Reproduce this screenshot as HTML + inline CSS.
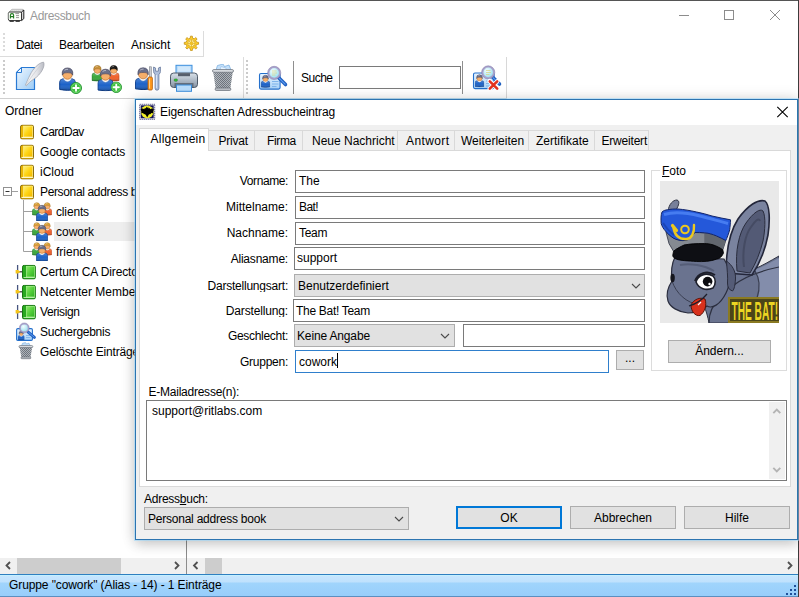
<!DOCTYPE html>
<html>
<head>
<meta charset="utf-8">
<title>Adressbuch</title>
<style>
html,body{margin:0;padding:0;}
body{width:799px;height:597px;overflow:hidden;background:#fff;font-family:"Liberation Sans",sans-serif;font-size:12px;color:#000;position:relative;}
.a{position:absolute;box-sizing:border-box;}
svg{position:absolute;overflow:visible;}
.t{position:absolute;white-space:nowrap;line-height:14px;height:14px;}
.inp{position:absolute;box-sizing:border-box;border:1px solid #7a7a7a;background:#fff;height:23px;}
.cmb{position:absolute;box-sizing:border-box;border:1px solid #adadad;background:#e1e1e1;height:23px;}
.btn{position:absolute;box-sizing:border-box;border:1px solid #adadad;background:#e1e1e1;text-align:center;}
.lbl{position:absolute;white-space:nowrap;text-align:right;width:150px;left:138px;line-height:14px;height:14px;}
.tab{position:absolute;box-sizing:border-box;top:131px;height:20px;border:1px solid #d9d9d9;border-bottom:none;background:#f0f0f0;text-align:left;line-height:21px;white-space:nowrap;}
.grip{position:absolute;width:2px;background:repeating-linear-gradient(to bottom,#cbcbcb 0,#cbcbcb 2px,transparent 2px,transparent 4px);}
</style>
</head>
<body>
<svg width="0" height="0" style="position:absolute">
<defs>
<linearGradient id="gpg" x1="0" y1="0" x2="1" y2="1"><stop offset="0" stop-color="#eef7ff"/><stop offset="1" stop-color="#9ccbf5"/></linearGradient>
<linearGradient id="gfe" x1="0" y1="0" x2="1" y2="0"><stop offset="0" stop-color="#ffffff"/><stop offset=".6" stop-color="#e4e5e9"/><stop offset="1" stop-color="#b9bbc3"/></linearGradient>
<linearGradient id="gpr" x1="0" y1="0" x2="0" y2="1"><stop offset="0" stop-color="#d9e2ea"/><stop offset="1" stop-color="#8592a2"/></linearGradient>
<linearGradient id="gtr" x1="0" y1="0" x2="1" y2="0"><stop offset="0" stop-color="#c9cdd2"/><stop offset=".5" stop-color="#8d939b"/><stop offset="1" stop-color="#b4b9bf"/></linearGradient>
<linearGradient id="gcard" x1="0" y1="0" x2="0" y2="1"><stop offset="0" stop-color="#e6f3ff"/><stop offset="1" stop-color="#a8d2f8"/></linearGradient>
<linearGradient id="gyb" x1="0" y1="0" x2="1" y2="1"><stop offset="0" stop-color="#fff27a"/><stop offset=".5" stop-color="#ffd414"/><stop offset="1" stop-color="#f0b400"/></linearGradient>
<linearGradient id="ggb" x1="0" y1="0" x2="1" y2="1"><stop offset="0" stop-color="#8fe86a"/><stop offset=".5" stop-color="#55d03c"/><stop offset="1" stop-color="#2fb022"/></linearGradient>
<radialGradient id="glens" cx=".4" cy=".35" r=".7"><stop offset="0" stop-color="#f4fdff"/><stop offset="1" stop-color="#8fdcec"/></radialGradient>
<pattern id="mesh" width="2" height="2" patternUnits="userSpaceOnUse"><rect width="2" height="2" fill="#b4bac1"/><rect width="1" height="1" fill="#5d636b"/><rect x="1" y="1" width="1" height="1" fill="#5d636b"/></pattern>
<linearGradient id="gshade" x1="0" y1="0" x2="0" y2="1"><stop offset="0" stop-color="#fff" stop-opacity=".22"/><stop offset=".5" stop-color="#fff" stop-opacity="0"/><stop offset="1" stop-color="#000" stop-opacity=".25"/></linearGradient>
<symbol id="person" viewBox="0 0 17 24">
<path d="M.7,22.8V15.5Q.7,12.4 4.2,12.1L8.5,14.6L12.8,12.1Q16.3,12.4 16.3,15.5V22.8Q8.5,24.5 .7,22.8Z" fill="var(--b)" stroke="var(--bs)" stroke-width="1"/>
<path d="M.7,22.8V15.5Q.7,12.4 4.2,12.1L8.5,14.6L12.8,12.1Q16.3,12.4 16.3,15.5V22.8Q8.5,24.5 .7,22.8Z" fill="url(#gshade)"/>
<path d="M4.6,12.2Q8.5,17.2 12.4,12.2L11,10.8H6Z" fill="#fff" stroke="#cfd9e6" stroke-width=".4"/>
<ellipse cx="8.5" cy="7.2" rx="4.9" ry="5.4" fill="#f5ae6a" stroke="#b8702f" stroke-width=".7"/>
<path d="M3.3,8.4Q2.3,1.4 8.5,1.2Q14.7,1.4 13.7,8.4Q12.8,5.4 8.5,6Q4.2,5.4 3.3,8.4Z" fill="var(--h)" stroke="var(--hs)" stroke-width=".6"/>
<path d="M5.5,3.6Q7,2.4 9,2.6" stroke="#fff" stroke-width=".9" fill="none" opacity=".6"/>
</symbol>
<symbol id="plus" viewBox="0 0 12 12">
<circle cx="6" cy="6" r="5.5" fill="#3fbf3f" stroke="#1c8c2a" stroke-width=".9"/>
<circle cx="6" cy="6" r="4.6" fill="none" stroke="#8fe88a" stroke-width=".6"/>
<path d="M6,3.2V8.8M3.2,6H8.8" stroke="#fff" stroke-width="1.9" stroke-linecap="round"/>
</symbol>
<symbol id="ybook" viewBox="0 0 14 15">
<path d="M2.4,.5H11.8Q13.5,.5 13.5,2.2V12.8Q13.5,14.5 11.8,14.5H2.4Q.5,14.5 .5,12.6V2.4Q.5,.5 2.4,.5Z" fill="#e8b400" stroke="#8a6d10" stroke-width="1"/>
<rect x="3.6" y="1.5" width="9" height="10.8" fill="url(#gyb)" stroke="#fff4a0" stroke-width=".6"/>
<path d="M1.6,12.9H12.9" stroke="#fffbe0" stroke-width=".9"/>
</symbol>
<symbol id="gbook" viewBox="0 0 14 15">
<path d="M2.4,.5H11.8Q13.5,.5 13.5,2.2V12.8Q13.5,14.5 11.8,14.5H2.4Q.5,14.5 .5,12.6V2.4Q.5,.5 2.4,.5Z" fill="#27a81e" stroke="#14730f" stroke-width="1"/>
<rect x="4.4" y="1.5" width="8.2" height="10.8" fill="url(#ggb)" stroke="#b4f59a" stroke-width=".6"/>
<path d="M1.6,12.9H12.9" stroke="#d8ffc8" stroke-width=".8"/>
</symbol>
<symbol id="group" viewBox="0 0 20 19">
<use href="#person" x="0" y="0" width="9.6" height="13.6" style="--b:#3aa63a;--bs:#1e7a22;--h:#d8a23a;--hs:#a87420"/>
<use href="#person" x="10.4" y="0" width="9.6" height="13.6" style="--b:#f0602a;--bs:#b8401a;--h:#d8a23a;--hs:#a87420"/>
<use href="#person" x="3.9" y="2.4" width="12.2" height="17.2" style="--b:#1c62c8;--bs:#0e3f8e;--h:#6a6f8a;--hs:#3e4260"/>
</symbol>
<symbol id="trash" viewBox="0 0 22 27">
<path d="M4,6L5.5,1.5L11,0L12.5,2.5L17,1L19,6Z" fill="#c4e0fa" stroke="#74aade" stroke-width=".7"/>
<path d="M8,6L9,2.5L14,4L14.5,6Z" fill="#e8f4ff" stroke="#8fbbe6" stroke-width=".6"/>
<path d="M1.2,7.5H20.8L18.2,25H3.8Z" fill="url(#mesh)"/>
<path d="M1.2,7.5H20.8L18.2,25H3.8Z" fill="url(#gtr)" opacity=".3"/>
<rect x=".5" y="5.6" width="21" height="2.6" rx="1.3" fill="#dfe3e7" stroke="#6a7078" stroke-width=".8"/>
<rect x="3.2" y="24" width="15.6" height="2.4" rx="1" fill="#c2c7cc" stroke="#6a7078" stroke-width=".8"/>
</symbol>
<symbol id="scard" viewBox="0 0 30 30">
<rect x="2" y="13" width="20.6" height="15.6" rx="1.5" fill="url(#gcard)" stroke="#2470cc" stroke-width="1.1"/>
<use href="#person" x="3.3" y="14" width="9.4" height="13.3" style="--b:#1c62c8;--bs:#0e3f8e;--h:#6a6f8a;--hs:#3e4260"/>
<path d="M14.5,21H21M14.5,23.5H21M14.5,26H19" stroke="#7fb4ea" stroke-width="1"/>
<path d="M21.5,17.5L28,24" stroke="#1f5fc0" stroke-width="3.6" stroke-linecap="round"/>
<path d="M21.8,17.8L27.6,23.6" stroke="#5a9af0" stroke-width="1.2" stroke-linecap="round"/>
<circle cx="16.7" cy="12.4" r="5.7" fill="url(#glens)" stroke="#a9a2cc" stroke-width="1.8"/>
<circle cx="16.7" cy="12.4" r="6.6" fill="none" stroke="#7a74a4" stroke-width=".5"/>
<path d="M14.5,10.5H19M14.5,12.5H19.5M14.5,14.5H18" stroke="#d8d070" stroke-width=".8" opacity=".8"/>
</symbol>

</defs>
</svg>
<!-- main window frame -->
<div class="a" id="topline" style="left:0;top:0;width:799px;height:1px;background:#555;"></div>
<div class="a" id="rightline" style="left:798px;top:0;width:1px;height:597px;background:#3c3c3c;"></div>
<div class="t" id="title" style="left:30px;top:9px;color:#999;letter-spacing:-0.34px;">Adressbuch</div>
<!--TITLEICONS-->

<!-- menu -->
<div class="a" id="menuband" style="left:0;top:31px;width:204px;height:26px;border-right:1px solid #dcdcdc;border-bottom:1px solid #dcdcdc;"></div>
<div class="grip" style="left:3px;top:33px;height:20px;opacity:.7;"></div>
<div class="t" style="left:16px;top:38px;letter-spacing:-0.4px;">Datei</div>
<div class="t" style="left:59px;top:38px;letter-spacing:-0.3px;">Bearbeiten</div>
<div class="t" style="left:131px;top:38px;">Ansicht</div>

<!-- toolbar -->
<div class="a" id="tbband" style="left:0;top:57px;width:507px;height:42px;border-right:1px solid #d8d8d8;border-bottom:1px solid #d0d0d0;"></div>
<div class="grip" style="left:3px;top:60px;height:34px;"></div>
<div class="a" style="left:243px;top:57px;width:1px;height:41px;background:#dcdcdc;"></div>
<div class="grip" style="left:246px;top:60px;height:34px;"></div>
<div class="a" style="left:293px;top:61px;width:1px;height:33px;background:#8f8f8f;"></div>
<div class="a" style="left:462px;top:61px;width:1px;height:33px;background:#8f8f8f;"></div>
<div class="t" style="left:301px;top:71px;letter-spacing:-0.5px;">Suche</div>
<div class="inp" style="left:339px;top:66px;width:122px;height:23px;"></div>
<svg id="ov1" width="799" height="597" viewBox="0 0 799 597" style="left:0;top:0;">
<!-- title icon -->
<g id="ticon">
<path d="M9,12L12,9.3H22.7L21.5,12Z" fill="#fafafa" stroke="#777" stroke-width=".5"/>
<path d="M11.6,10.6H21.8" stroke="#b0b0b0" stroke-width=".8" stroke-dasharray="1 1"/>
<path d="M21.6,12L23.8,10V18.6L21.6,20.6Z" fill="#fff" stroke="#000" stroke-width=".9"/>

<rect x="8.4" y="12" width="13.2" height="8.6" rx="1.4" fill="#fbfdf8" stroke="#1a1a1a" stroke-width=".9"/>
<path d="M8.4,19V13.4Q8.4,12 9.8,12H20" fill="none" stroke="#9aa09a" stroke-width=".9"/>
<path d="M9.6,20.8h4.2v1h-4.2zM15.6,20.8h4.2v1h-4.2z" fill="#111"/>
<path d="M10.4,18.6V15.2Q10.4,13.6 12,13.6Q13.6,13.6 13.6,15.2V18.6M10.4,16.6H13.6" stroke="#1f7a1f" stroke-width="1.1" fill="none"/>
<path d="M15.3,13.6H19M16,15.6H19M16,17.6H19" stroke="#8a8a8a" stroke-width=".9"/>
</g>
<!-- window controls -->
<path d="M679,15.5H689" stroke="#8c8c8c" stroke-width="1"/>
<rect x="724.5" y="10.5" width="9" height="9" fill="none" stroke="#8c8c8c" stroke-width="1"/>
<path d="M770,10L780,20M780,10L770,20" stroke="#8c8c8c" stroke-width="1"/>
<!-- gear -->
<path d="M196.58,42.17L198.54,42.35L198.54,44.25L196.58,44.43L195.86,46.16L197.12,47.68L195.78,49.02L194.26,47.76L192.53,48.48L192.35,50.44L190.45,50.44L190.27,48.48L188.54,47.76L187.02,49.02L185.68,47.68L186.94,46.16L186.22,44.43L184.26,44.25L184.26,42.35L186.22,42.17L186.94,40.44L185.68,38.92L187.02,37.58L188.54,38.84L190.27,38.12L190.45,36.16L192.35,36.16L192.53,38.12L194.26,38.84L195.78,37.58L197.12,38.92L195.86,40.44Z" fill="#ffcf2a" stroke="#c4921a" stroke-width=".8"/>
<circle cx="191.4" cy="43.3" r="3.7" fill="#fff3b0" stroke="#d6a51c" stroke-width=".7"/>
<path d="M191.4,39.6V47M187.7,43.3H195.1M188.8,40.7L194,45.9M194,40.7L188.8,45.9" stroke="#e0ae1e" stroke-width=".9"/>
<circle cx="191.4" cy="43.3" r="1.2" fill="#f2c226"/>
<!-- tb1 page+feather -->
<path d="M21.5,67.5H34.5V89.5H16.5V72.5Z" fill="url(#gpg)" stroke="#2a7ad4" stroke-width="1.2"/>
<path d="M21.5,67.5V72.5H16.5Z" fill="#f4faff" stroke="#2a7ad4" stroke-width="1"/>
<path d="M43.6,62.2C45.5,66 41,74.5 34,79C31,81 28.6,82.5 26.4,85.8L25.4,85.2C27,81.5 28,79 30,75C33,68.5 39,62.5 43.6,62.2Z" fill="url(#gfe)" stroke="#9a9ca6" stroke-width=".7"/>
<path d="M42.5,63.5C38,68 31,77 26,85" fill="none" stroke="#c8cad0" stroke-width=".7"/>
<!-- tb2 person add -->
<use href="#person" x="59" y="66.4" width="17" height="24.6" style="--b:#1c62c8;--bs:#0e3f8e;--h:#6a6f8a;--hs:#3e4260"/>
<use href="#plus" x="70" y="82" width="12" height="12"/>
<!-- tb3 group add -->
<use href="#person" x="91.5" y="64.2" width="11.8" height="17.6" style="--b:#3aa63a;--bs:#1e7a22;--h:#c8923a;--hs:#8a6420"/>
<use href="#person" x="107.8" y="64.2" width="11.8" height="17.6" style="--b:#f0602a;--bs:#b8401a;--h:#1a1a1a;--hs:#000"/>
<use href="#person" x="97.3" y="68" width="16.4" height="23.2" style="--b:#1c62c8;--bs:#0e3f8e;--h:#6a6f8a;--hs:#3e4260"/>
<use href="#plus" x="110.5" y="81.5" width="11.5" height="11.5"/>
<!-- tb4 person tools -->
<use href="#person" x="134.8" y="66.5" width="16.6" height="23.6" style="--b:#1c62c8;--bs:#0e3f8e;--h:#6a6f8a;--hs:#3e4260"/>
<rect x="149.3" y="66.8" width="2" height="11" fill="#c9ccd2" stroke="#7e828a" stroke-width=".6"/>
<rect x="148" y="77" width="4.4" height="13" rx="1.2" fill="#ff9a1e" stroke="#b85e0a" stroke-width=".8"/>
<path d="M149.5,78.5V88.5" stroke="#ffd08a" stroke-width="1"/>
<path d="M153.6,67V71.5Q153.6,73.6 155.1,74.2V88.2Q155.1,90.2 157,90.2Q158.9,90.2 158.9,88.2V74.2Q160.4,73.6 160.4,71.5V67L158.4,68V71.2H155.6V68Z" fill="#aebfdc" stroke="#64769a" stroke-width=".8"/><path d="M156.4,75V88" stroke="#dfe8f6" stroke-width="1"/>
<!-- tb5 printer -->
<rect x="176" y="65.3" width="16" height="9" fill="#b9dcfb" stroke="#3d8fdd" stroke-width="1"/>
<rect x="178" y="66.5" width="12" height="5" fill="#dcecfb" opacity=".7"/>
<rect x="170.5" y="73" width="27" height="14.5" rx="3.2" fill="url(#gpr)" stroke="#4e5a68" stroke-width="1"/>
<rect x="178" y="73.2" width="12" height="3" fill="#565f6c"/>
<rect x="174.3" y="79" width="3" height="2.2" rx=".6" fill="#38c838" stroke="#1a7a1a" stroke-width=".5"/>
<rect x="174.5" y="83" width="19" height="4.3" fill="#646e7c"/>
<rect x="176.5" y="85" width="15" height="6.3" fill="#b9dcfb" stroke="#3d8fdd" stroke-width="1"/>
<!-- tb6 trash -->
<use href="#trash" x="212" y="64" width="22" height="27"/>
<!-- tb7 search card -->
<use href="#scard" x="257.5" y="60.5" width="30" height="30"/>
<!-- tb8 search card cancel -->
<use href="#scard" x="471.5" y="60" width="30" height="30"/>
<path d="M489.5,81L497.5,89M497.5,81L489.5,89" stroke="#fff" stroke-width="4.2" stroke-linecap="round"/>
<path d="M489.8,81.3L497.2,88.7M497.2,81.3L489.8,88.7" stroke="#e2321e" stroke-width="2.6" stroke-linecap="round"/>
<!-- tree -->
<use href="#ybook" x="20" y="124.6" width="14" height="15"/>
<use href="#ybook" x="20" y="144.6" width="14" height="15"/>
<use href="#ybook" x="20" y="164.6" width="14" height="15"/>
<use href="#ybook" x="20" y="184.6" width="14" height="15"/>
<rect x="3.5" y="187.5" width="8" height="8" fill="#fff" stroke="#919191" stroke-width="1"/>
<path d="M5.5,191.5H9.5" stroke="#333" stroke-width="1"/>
<path d="M12,191.5H18" stroke="#a0a0a0" stroke-width="1"/>
<path d="M23.5,200V251.5M23.5,211.5H33M23.5,231.5H33M23.5,251.5H33" stroke="#a0a0a0" stroke-width="1" fill="none"/>
<use href="#group" x="32" y="202" width="20" height="19"/>
<use href="#group" x="32" y="222" width="20" height="19"/>
<use href="#group" x="32" y="242" width="20" height="19"/>
<g id="gb1">
<path d="M17.6,265V279" stroke="#46547e" stroke-width="1.3"/><path d="M18,271.8H22" stroke="#333" stroke-width="1.2"/>
<path d="M15.6,270H18L20.4,271.8L18,273.6H15.6Z" fill="#f4c41a"/>
<use href="#gbook" x="21.8" y="264.8" width="14.2" height="14.8"/>
</g>
<use href="#gb1" y="20"/><use href="#gb1" y="40"/>
<g id="ssearch">
<rect x="16.6" y="328.6" width="15.8" height="11.8" rx="1.2" fill="url(#gcard)" stroke="#2470cc" stroke-width="1.1"/>
<use href="#person" x="17.8" y="330.6" width="6.8" height="9.6" style="--b:#1c62c8;--bs:#0e3f8e;--h:#6a6f8a;--hs:#3e4260"/>
<path d="M26,335.5H30.5M26,337.5H30.5" stroke="#7fb4ea" stroke-width=".9"/>
<path d="M28.2,332.2L34.4,337.4" stroke="#1f5fc0" stroke-width="3" stroke-linecap="round"/>
<path d="M28.6,332.4L34,337" stroke="#5a9af0" stroke-width="1" stroke-linecap="round"/>
<circle cx="24.3" cy="327.9" r="4.2" fill="url(#glens)" stroke="#a9a2cc" stroke-width="1.5"/>
<circle cx="24.3" cy="327.9" r="5" fill="none" stroke="#7a74a4" stroke-width=".4"/>
</g>
<g id="strash">
<path d="M21.5,346L22.5,343.3L25.5,342.6L26.5,344L29,343.2L30.3,346Z" fill="#c4e0fa" stroke="#74aade" stroke-width=".6"/>
<path d="M19.6,347H32.2L30.4,357.6H21.4Z" fill="url(#mesh)"/>
<path d="M19.6,347H32.2L30.4,357.6H21.4Z" fill="url(#gtr)" opacity=".3"/>
<rect x="19" y="345.6" width="13.8" height="2" rx="1" fill="#dfe3e7" stroke="#6a7078" stroke-width=".7"/>
<rect x="21" y="357" width="9.8" height="1.7" rx=".8" fill="#c2c7cc" stroke="#6a7078" stroke-width=".7"/>
</g>
</svg>


<!-- left panel -->
<div class="t" style="left:5px;top:104px;">Ordner</div>
<div class="a" id="sel" style="left:54px;top:222px;width:90px;height:19px;background:#eeeeee;"></div>
<!--TREEICONS-->
<div class="t" style="left:40px;top:125px;letter-spacing:-0.5px;">CardDav</div>
<div class="t" style="left:40px;top:145px;letter-spacing:-0.1px;">Google contacts</div>
<div class="t" style="left:40px;top:165px;">iCloud</div>
<div class="t" style="left:40px;top:185px;letter-spacing:-0.35px;">Personal address b</div>
<div class="t" style="left:56px;top:205px;letter-spacing:-0.15px;">clients</div>
<div class="t" style="left:56px;top:225px;">cowork</div>
<div class="t" style="left:56px;top:245px;">friends</div>
<div class="t" style="left:40px;top:265px;letter-spacing:-0.13px;">Certum CA Directc</div>
<div class="t" style="left:40px;top:285px;">Netcenter Membe</div>
<div class="t" style="left:40px;top:305px;letter-spacing:-0.4px;">Verisign</div>
<div class="t" style="left:40px;top:325px;letter-spacing:-0.27px;">Suchergebnis</div>
<div class="t" style="left:40px;top:345px;letter-spacing:-0.17px;">Gelöschte Einträge</div>

<!-- splitter, scrollbars -->
<div class="a" id="split" style="left:186px;top:99px;width:1px;height:475px;background:#8c8c8c;"></div>
<div class="a" id="hs1" style="left:0;top:558px;width:186px;height:16px;background:#f0f0f0;"></div>
<div class="a" id="hs1t" style="left:17px;top:558px;width:104px;height:16px;background:#cdcdcd;"></div>
<div class="a" id="hs2" style="left:187px;top:558px;width:611px;height:16px;background:#f0f0f0;"></div>
<div class="a" id="hs2t" style="left:205px;top:558px;width:17px;height:16px;background:#cdcdcd;"></div>
<!--SCROLLARROWS-->

<!-- status bar -->
<div class="a" id="status" style="left:0;top:574px;width:798px;height:23px;border-top:1px solid #2f7fc0;border-bottom:1px solid #5c8fc0;background:linear-gradient(#c4f0ff 0,#c4f0ff 1px,#c6e5fe 1px,#bfe1fd 7px,#a0d4fc 8px,#98cefb 100%);"></div>
<div class="t" style="left:9px;top:578px;letter-spacing:-0.1px;">Gruppe "cowork" (Alias - 14) - 1 Einträge</div>

<!-- dialog -->
<div class="a" id="dlg" style="left:135px;top:99px;width:663px;height:441px;border:1px solid #2c74b0;background:#f0f0f0;box-shadow:0 0 0 1px rgba(150,215,255,0.5),0 0 14px rgba(0,0,0,0.15),0 5px 12px rgba(0,0,0,0.15);"></div>
<div class="a" id="dlgtitle" style="left:136px;top:100px;width:661px;height:25px;background:#fff;"></div>
<div class="t" style="left:160px;top:105px;letter-spacing:-0.12px;">Eigenschaften Adressbucheintrag</div>
<!--DLGICONS-->
<!-- tab page -->
<div class="a" id="page" style="left:139px;top:150px;width:652px;height:337px;background:#fff;border:1px solid #d9d9d9;"></div>
<div class="tab" style="left:208px;top:130px;width:47px;padding-left:9.5px;letter-spacing:-.2px;">Privat</div>
<div class="tab" style="left:254px;top:130px;width:49px;padding-left:12px;letter-spacing:-.35px;">Firma</div>
<div class="tab" style="left:302px;top:130px;width:96px;padding-left:9px;">Neue Nachricht</div>
<div class="tab" style="left:397px;top:130px;width:58px;padding-left:8px;letter-spacing:.4px;">Antwort</div>
<div class="tab" style="left:454px;top:130px;width:75px;padding-left:6px;">Weiterleiten</div>
<div class="tab" style="left:528px;top:130px;width:67px;padding-left:7px;">Zertifikate</div>
<div class="tab" style="left:594px;top:130px;width:55px;padding-left:6.5px;letter-spacing:-.2px;border-right:1px solid #d9d9d9;">Erweitert</div>
<div class="tab" style="left:139px;top:128px;width:70px;height:23px;background:#fff;line-height:21px;padding-left:10.5px;letter-spacing:.25px;">Allgemein</div>

<!-- form -->
<div class="lbl" style="top:174px;letter-spacing:-0.4px;">Vorname:</div>
<div class="lbl" style="top:200px;">Mittelname:</div>
<div class="lbl" style="top:226px;">Nachname:</div>
<div class="lbl" style="top:252px;letter-spacing:-0.2px;">Aliasname:</div>
<div class="lbl" style="top:279px;height:13px;overflow:hidden;letter-spacing:-0.22px;">Darstellungsart:</div>
<div class="lbl" style="top:303.5px;height:13px;overflow:hidden;letter-spacing:-0.15px;">Darstellung:</div>
<div class="lbl" style="top:329px;letter-spacing:-0.3px;">Geschlecht:</div>
<div class="lbl" style="top:355px;letter-spacing:-0.25px;">Gruppen:</div>

<div class="inp" style="left:295px;top:170px;width:350px;"></div>
<div class="inp" style="left:295px;top:196px;width:350px;"></div>
<div class="inp" style="left:295px;top:222px;width:350px;"></div>
<div class="inp" style="left:294px;top:247px;width:351px;"></div>
<div class="cmb" style="left:294px;top:274px;width:351px;"></div>
<div class="inp" style="left:293px;top:299px;width:352px;"></div>
<div class="cmb" style="left:294px;top:324px;width:161px;"></div>
<div class="inp" style="left:463px;top:324px;width:182px;"></div>
<div class="inp" style="left:295px;top:350px;width:314px;border-color:#2f7fcc;"></div>
<div class="btn" style="left:616px;top:350px;width:28px;height:20px;line-height:14px;">...</div>
<div class="a" id="caret" style="left:337px;top:353px;width:1px;height:15px;background:#000;"></div>

<div class="t" style="left:299px;top:174px;">The</div>
<div class="t" style="left:299px;top:200px;letter-spacing:-0.6px;">Bat!</div>
<div class="t" style="left:299px;top:226px;letter-spacing:-0.3px;">Team</div>
<div class="t" style="left:297px;top:251px;">support</div>
<div class="t" style="left:298px;top:279px;">Benutzerdefiniert</div>
<div class="t" style="left:296px;top:303.5px;letter-spacing:-0.3px;">The Bat! Team</div>
<div class="t" style="left:297px;top:329px;letter-spacing:-0.15px;">Keine Angabe</div>
<div class="t" style="left:299px;top:355px;">cowork</div>
<!--COMBOARROWS-->

<!-- photo group -->
<div class="a" id="grp" style="left:651px;top:170px;width:136px;height:201px;border:1px solid #dcdcdc;"></div>
<div class="t" style="left:660px;top:164px;background:#fff;padding:0 13px 0 2px;"><u>F</u>oto</div>
<svg id="photo" width="119" height="142" viewBox="0 0 119 142" style="left:660px;top:181px;overflow:hidden;">
<rect width="119" height="142" fill="#e9e9e9"/>
<!-- body / wing background right -->
<path d="M60,84L94,88C102,85 110,80 119,75V142H49C48,136 46,130 44,124L62,100Z" fill="#6a738f" stroke="#2e3242" stroke-width="1"/>
<path d="M95,89C102,86 110,82 119,77V117H98C100,106 99,96 95,89Z" fill="#838dab"/>
<path d="M74,104C84,96 100,90 119,86" fill="none" stroke="#2e3242" stroke-width="1.2"/>
<path d="M95,90C100,98 100,108 97,117" fill="none" stroke="#3a3f52" stroke-width="1.2"/>
<path d="M49,142C49,132 52,124 60,118" fill="none" stroke="#2e3242" stroke-width="1.2"/>
<!-- left small ear -->
<path d="M8,30C9,23 13,19 17,19C20,20 19,24 16,29Z" fill="#78809a" stroke="#2e3242" stroke-width="1"/>
<!-- big right ear -->
<path d="M66,92C66,70 69,52 78,38C88,24 98,18 105,20C110,24 110,40 108,54C105,70 100,82 92,94Z" fill="#7a839f" stroke="#23263a" stroke-width="1.6"/>
<path d="M77,90C75,70 79,52 86,42C93,32 100,27 103,30C106,36 105,50 103,60C100,72 96,82 90,92Z" fill="#535a75" stroke="#2a2d3e" stroke-width="1"/>
<path d="M84,86C82,70 85,54 91,46C95,40 99,36 100,40" fill="none" stroke="#454b63" stroke-width="2"/>
<!-- head -->
<path d="M15,76C11,84 11,92 12,100C8,106 6,114 8,120C10,126 18,131 28,132C36,132 42,129 47,125C52,128 60,124 66,112C72,100 70,88 64,78Z" fill="#6a738f" stroke="#2a2d3e" stroke-width="1.2"/>
<path d="M12,100C16,112 26,122 40,124" fill="none" stroke="#3a3f52" stroke-width="1"/>
<path d="M66.5,80C72,84 76,90 75.5,98C75,104 74.5,108 72.5,110C69,109 67.5,106 67.5,102C68,96 67,88 66.5,80Z" fill="#555c77" stroke="#2a2d3e" stroke-width="1"/>
<path d="M20,84C30,82 44,84 54,90" fill="none" stroke="#565e78" stroke-width="2"/>
<ellipse cx="12.6" cy="97" rx="2.2" ry="4.2" fill="#15161e"/>
<!-- eye -->
<path d="M36,101C38,94 46,91 53,95C56,98 56,103 53,107C46,110 39,108 36,101Z" fill="#fff" stroke="#1d1f2b" stroke-width="1.6"/>
<circle cx="47.6" cy="100.6" r="4.8" fill="#0c0c10"/>
<circle cx="49.5" cy="103" r="1.2" fill="#fff"/>
<path d="M35,100C38,92 47,89 55,94" fill="none" stroke="#1d1f2b" stroke-width="2"/>
<!-- mouth -->
<path d="M31,124C34,118 40,116 45,118C47,124 45,131 40,134.5C35,135.5 31,130 31,124Z" fill="#d8311c" stroke="#5a1208" stroke-width="1"/>
<path d="M38,124L41,121" stroke="#fff" stroke-width="1.2"/>
<path d="M29,125C36,123 42,119 47,113" fill="none" stroke="#1d1f2b" stroke-width="1.2"/>
<!-- cap: grey band -->
<path d="M5.8,50.3L13.5,57.2L21.2,59.5L27.4,58.8L35,51.5L44.3,51.8L56.6,55L65.8,59.5L62.8,68.8C56,64 50,62.6 44.3,62.6C36,62.6 30,63 24.3,64C20,66 16,68 13.5,70.3L9,62.6Z" fill="#858a92" stroke="#2a2d3e" stroke-width=".8"/>
<path d="M44.3,51.8L56.6,55L65.8,59.5L62.8,68.8C56,64 50,62.6 44.3,62.6Z" fill="#62676f"/>
<!-- visor -->
<path d="M13.5,70.3C16,68 20,66 24.3,64C30,63 36,62.6 44.3,62.6C50,62.6 56,64 62.8,68.8L63.5,72C62,76 59,78 56.6,78.2C50,80.5 43,80.8 36.6,80.5C28,80 20,79.5 16.6,78.2C14,77 12.5,76 12.8,74Z" fill="#0e0f14" stroke="#000" stroke-width=".8"/>
<!-- crown -->
<path d="M2,31C3.5,29.5 5.5,29 7.4,28.8C11,28 14,28 18,28C24,28.5 30,29.5 36.6,31C42,32 47,33.5 52,35C58,36.5 64,37.5 70.5,38.8C70.5,42 70,46 69.7,48.8C68.5,53 67,57 65.8,59.5C63,58 60,56.5 56.6,55C52,53 48,52 44.3,51.8C41,51.4 38,51.3 35,51.5C32,53.5 30,56 27.4,58.8C25,59.5 23,59.8 21.2,59.5C18,59 16,58.5 13.5,57.2C10,55 8,53 5.8,50.3C3.5,48 2,45.5 1.2,42.6C.8,38 1,34 2,31Z" fill="#2458da" stroke="#12256a" stroke-width="1"/>
<path d="M4,33.5C12,31 26,31.5 40,35C50,37.5 60,40.5 68,42.5" fill="none" stroke="#4f86f6" stroke-width="3" opacity=".8"/>
<path d="M3,42C6,47 10,51 14,54" fill="none" stroke="#1a3fa8" stroke-width="2" opacity=".7"/>
<!-- horn emblem -->
<circle cx="25" cy="48.5" r="3.8" fill="none" stroke="#ecc81e" stroke-width="2"/>
<path d="M13.5,47C15,55 20,58.5 26.5,58C31.5,57.5 34.5,52 34,44" fill="none" stroke="#ecc81e" stroke-width="2.4" stroke-linecap="round"/>
<path d="M12.5,44.5L16.5,49.5" stroke="#ecc81e" stroke-width="3.2" stroke-linecap="round"/>
<!-- sign -->
<rect x="68" y="116" width="51" height="26" fill="#8a7a22"/>
<rect x="70" y="118" width="49" height="22" fill="#4b4518"/>
<g transform="translate(71.5,139) scale(1,1.45)"><text x="0" y="0" font-family="Liberation Sans" font-weight="bold" font-size="18" fill="#ecd522" textLength="46.5" lengthAdjust="spacingAndGlyphs">THE BAT!</text></g>
</svg>

<div class="btn" style="left:668px;top:340px;width:103px;height:23px;line-height:21px;">Ändern...</div>

<!-- email -->
<div class="t" style="left:148.5px;top:385px;letter-spacing:-0.24px;">E-Mailadresse(n):</div>
<div class="inp" style="left:146px;top:400px;width:641px;height:81px;"></div>
<div class="a" id="vs" style="left:769px;top:402px;width:16px;height:77px;background:#f0f0f0;"></div>
<div class="t" style="left:152px;top:404px;">support@ritlabs.com</div>

<!-- bottom -->
<div class="t" style="left:144px;top:492px;letter-spacing:-.26px;">Adress<u>b</u>uch:</div>
<div class="cmb" style="left:144px;top:507px;width:265px;"></div>
<div class="t" style="left:148px;top:512px;letter-spacing:-0.23px;">Personal address book</div>
<div class="btn" style="left:456px;top:506px;width:106px;height:23px;line-height:20px;border:2px solid #0078d7;">OK</div>
<div class="btn" style="left:570px;top:506px;width:106px;height:23px;line-height:22px;">Abbrechen</div>
<div class="btn" style="left:684px;top:506px;width:106px;height:23px;line-height:22px;">Hilfe</div>
<svg id="ov2" width="799" height="597" viewBox="0 0 799 597" style="left:0;top:0;">
<!-- bat icon -->
<g id="baticon" transform="translate(-0.8,-0.2)">
<rect x="140" y="104" width="16" height="16" fill="#fff"/>
<rect x="140.5" y="104.5" width="15" height="15" fill="none" stroke="#2a2a66" stroke-width="1" stroke-dasharray="1 1"/>
<rect x="141.5" y="105.5" width="13" height="13" fill="#14145a"/>
<circle cx="148" cy="112" r="6.4" fill="#f2f02a"/>
<g transform="translate(140,104)"><path d="M1.4,5.4 Q3.2,4.2 5,5.4 Q5.8,3.6 6.8,4.8 L7,2.6 L8,4.2 L9,2.6 L9.2,4.8 Q10.2,3.6 11,5.4 Q12.8,4.2 14.6,5.4 Q13.6,7.2 13.9,9.6 Q12.2,8.4 11.2,10.4 Q10,9.4 8,13.6 Q6,9.4 4.8,10.4 Q3.8,8.4 2.1,9.6 Q2.4,7.2 1.4,5.4Z" fill="#000"/></g>
</g>
<!-- dialog close -->
<path d="M777.3,106.8L787.7,117.2M787.7,106.8L777.3,117.2" stroke="#000" stroke-width="1.1" fill="none"/>
<!-- combo arrows -->
<g fill="none" stroke="#4a4a4a" stroke-width="1.1">
<path d="M632,284L636,288L640,284"/>
<path d="M441,334L445,338L449,334"/>
<path d="M395,517L399,521L403,517"/>
</g>
<!-- email scrollbar arrows -->
<g fill="none" stroke="#b4b4b4" stroke-width="1.9">
<path d="M773.3,413.2L776.8,409.6L780.3,413.2"/>
<path d="M773.3,467.8L776.8,471.4L780.3,467.8"/>
</g>
<!-- scroll arrows -->
<g fill="none" stroke="#505050" stroke-width="1.8">
<path d="M10,562L6.5,565.5L10,569"/><path d="M175,562L178.5,565.5L175,569"/>
<path d="M197.5,562L194,565.5L197.5,569"/><path d="M788,562L791.5,565.5L788,569"/>
</g>
<!-- status grip -->
<g fill="#1f4f9a"><rect x="794" y="585" width="2" height="2"/><rect x="790" y="589" width="2" height="2"/><rect x="794" y="589" width="2" height="2"/><rect x="786" y="593" width="2" height="2"/><rect x="790" y="593" width="2" height="2"/><rect x="794" y="593" width="2" height="2"/></g>
</svg>

</body>
</html>
